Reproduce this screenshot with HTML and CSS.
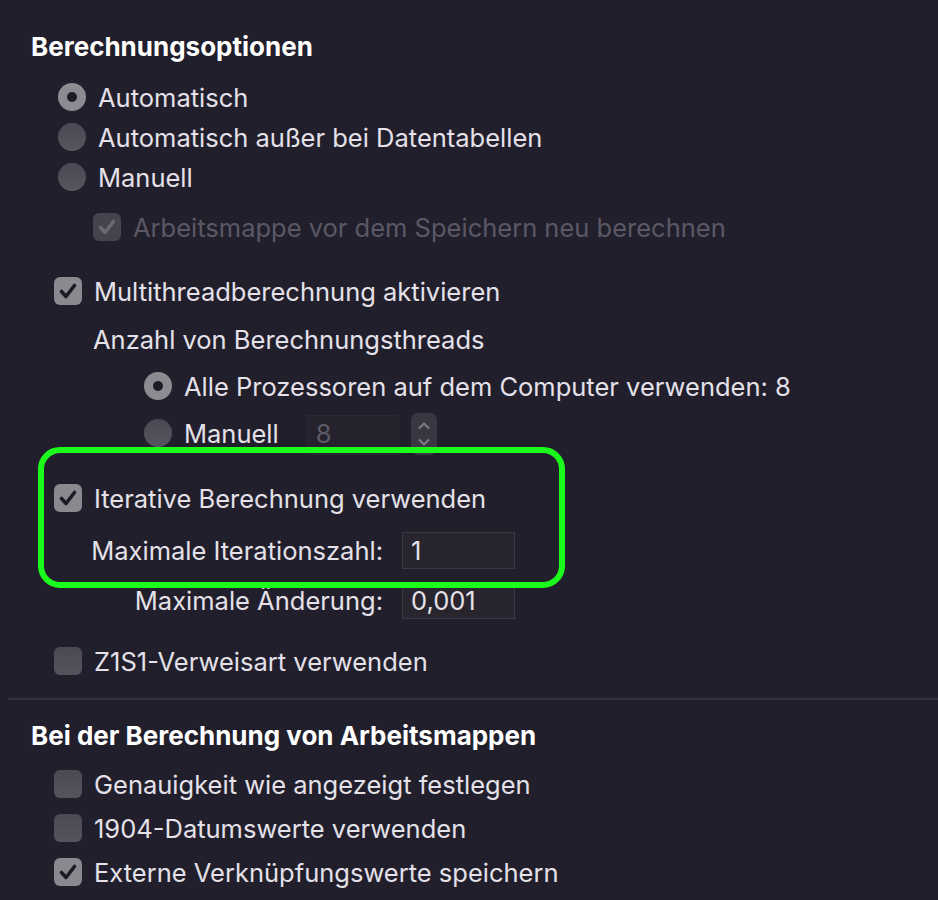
FILE: index.html
```html
<!DOCTYPE html>
<html lang="de">
<head>
<meta charset="utf-8">
<title>Berechnung</title>
<link rel="stylesheet" href="styles.css">
</head>
<body>
<div class="page">
  <section class="section first">
    <h2 class="heading">Berechnungsoptionen</h2>
    <div class="row r-auto indent1"><span class="radio on"></span><span class="label">Automatisch</span></div>
    <div class="row indent1"><span class="radio"></span><span class="label">Automatisch außer bei Datentabellen</span></div>
    <div class="row indent1"><span class="radio"></span><span class="label">Manuell</span></div>
    <div class="row r-save indent2"><span class="check on disabled"><svg viewBox="0 0 28 28"><path d="M7.5 14.5l4.5 5 8.5-11"/></svg></span><span class="label dim">Arbeitsmappe vor dem Speichern neu berechnen</span></div>
    <div class="row r-multi"><span class="check on"><svg viewBox="0 0 28 28"><path d="M7.5 14.5l4.5 5 8.5-11"/></svg></span><span class="label">Multithreadberechnung aktivieren</span></div>
    <div class="row r-anzahl"><span class="label plain">Anzahl von Berechnungsthreads</span></div>
    <div class="row r-alle indent3"><span class="radio on"></span><span class="label">Alle Prozessoren auf dem Computer verwenden: 8</span></div>
    <div class="row indent3 r-man"><span class="radio"></span><span class="label">Manuell</span>
      <span class="field disabled-field">8</span>
      <span class="stepper"><svg viewBox="0 0 26 42"><path d="M8.5 15l4.5-4.5 4.5 4.5"/><path d="M8.5 27l4.5 4.5 4.5-4.5"/></svg></span>
    </div>
    <div class="row r-iter"><span class="check on"><svg viewBox="0 0 28 28"><path d="M7.5 14.5l4.5 5 8.5-11"/></svg></span><span class="label">Iterative Berechnung verwenden</span></div>
    <div class="pair r-maxit"><span class="pair-label">Maximale Iterationszahl:</span><span class="field">1</span></div>
    <div class="pair r-maxch"><span class="pair-label">Maximale Änderung:</span><span class="field">0,001</span></div>
    <div class="row r-z1s1"><span class="check"></span><span class="label">Z1S1-Verweisart verwenden</span></div>
  </section>
  <hr class="sep">
  <section class="section">
    <h2 class="heading h2b">Bei der Berechnung von Arbeitsmappen</h2>
    <div class="row tall"><span class="check"></span><span class="label">Genauigkeit wie angezeigt festlegen</span></div>
    <div class="row tall"><span class="check"></span><span class="label">1904-Datumswerte verwenden</span></div>
    <div class="row tall"><span class="check on"><svg viewBox="0 0 28 28"><path d="M7.5 14.5l4.5 5 8.5-11"/></svg></span><span class="label">Externe Verknüpfungswerte speichern</span></div>
  </section>
  <div class="highlight"></div>
</div>
</body>
</html>
```

FILE: styles.css
```css
* { box-sizing: border-box; }
html, body {
  margin: 0;
  padding: 0;
  background: #221f2c;
}
body {
  font-family: Inter, "Noto Sans", "Liberation Sans", sans-serif;
  color: #e4e1e9;
  font-size: 25.5px;
  width: 938px;
  height: 900px;
  overflow: hidden;
}
.page {
  position: relative;
  height: 900px;
}
.section {
  display: flex;
  flex-direction: column;
  padding-left: 54px;
}
.section.first { padding-top: 27px; }
.heading {
  margin: 0 0 10px -23px;
  height: 40px;
  line-height: 40px;
  font-size: 26px;
  font-weight: 700;
  color: #ffffff;
  white-space: nowrap;
}
.row {
  display: flex;
  align-items: center;
  height: 40px;
  gap: 12px;
}
.row.tall { height: 44px; }
.indent1 { padding-left: 4px; }
.indent2 { padding-left: 39px; margin-top: 10px; }
.indent3 { padding-left: 90px; }
.r-multi { margin-top: 24px; }
.r-anzahl { margin-top: 8px; padding-left: 39px; }
.r-alle { margin-top: 7px; }
.r-man { margin-top: 7px; }
.r-iter { margin-top: 25px; }
.r-z1s1 { margin-top: 22px; }
.label { white-space: nowrap; }
.label.dim { color: #5b5865; }
.radio {
  flex: none;
  width: 28px;
  height: 28px;
  border-radius: 50%;
  background: linear-gradient(#4a4853, #57555e);
  position: relative;
}
.radio.on {
  background: #8d8b92;
}
.radio.on::after {
  content: "";
  position: absolute;
  left: 9px;
  top: 9px;
  width: 10px;
  height: 10px;
  border-radius: 50%;
  background: #1d1b23;
}
.check {
  flex: none;
  width: 28px;
  height: 28px;
  border-radius: 6px;
  background: linear-gradient(#4b4953, #55535c);
  display: flex;
}
.check.on { background: #8b8990; }
.check.on.disabled { background: #45434d; }
.check svg {
  width: 28px;
  height: 28px;
  fill: none;
  stroke: #1c1a22;
  stroke-width: 3.6;
  stroke-linecap: round;
  stroke-linejoin: round;
}
.check.disabled svg { stroke: #6a6872; }
.field {
  width: 113px;
  height: 37px;
  background: #28252f;
  border: 1px solid #3b3844;
  padding-left: 8px;
  line-height: 35px;
  color: #e4e1e9;
  font-size: 25.5px;
}
.disabled-field {
  width: 92px;
  height: 40px;
  margin-left: 16px;
  margin-top: 4px;
  color: #5e5b66;
  border-color: #2c2935;
  background: #25222d;
}
.stepper {
  width: 26px;
  height: 42px;
  margin-top: 2px;
  border-radius: 7px;
  background: #3a3743;
}
.stepper svg {
  width: 26px;
  height: 42px;
  fill: none;
  stroke: #7a7782;
  stroke-width: 2.2;
  stroke-linecap: round;
  stroke-linejoin: round;
}
.pair {
  display: grid;
  grid-template-columns: 329px 113px;
  column-gap: 19px;
  align-items: center;
  height: 37px;
}
.pair-label {
  text-align: right;
  white-space: nowrap;
}
.r-maxit { margin-top: 14px; }
.r-maxch { margin-top: 13px; }
.sep {
  margin: 17px 0 0 8px;
  border: none;
  height: 2px;
  background: #33303c;
}
.h2b { margin-top: 16px; margin-bottom: 6px; }
.highlight {
  position: absolute;
  left: 38px;
  top: 447px;
  width: 527px;
  height: 141px;
  border: 6px solid #1cfc1c;
  border-radius: 22px;
  pointer-events: none;
}
```
